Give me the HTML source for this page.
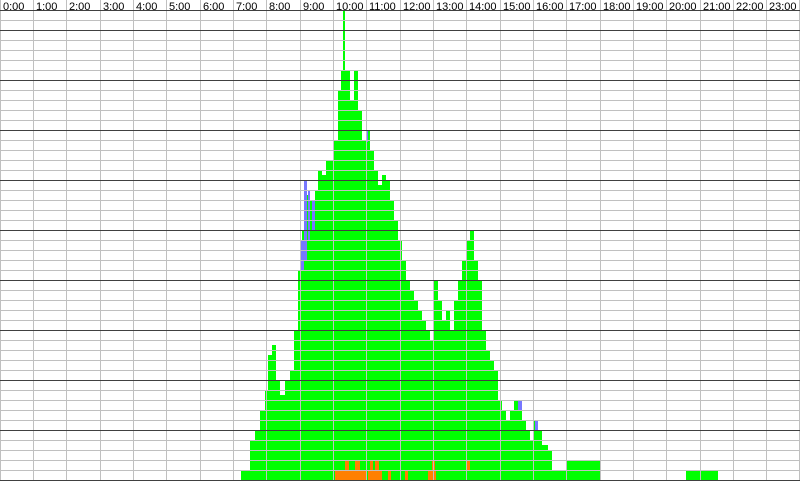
<!DOCTYPE html>
<html><head><meta charset="utf-8"><style>
html,body{margin:0;padding:0;background:#fff}
svg{display:block}
text{font-family:"Liberation Sans",sans-serif;font-size:11px;fill:#000}
</style></head><body>
<svg width="800" height="481" xmlns="http://www.w3.org/2000/svg" shape-rendering="crispEdges">
<rect width="800" height="481" fill="#fff"/>
<path fill="#00ff00" d="M241,481 V470 H250 V440 H255 V430 H260 V410 H265 V390 H268 V355 H272 V345 H276 V380 H280 V395 H285 V380 H290 V370 H294 V330 H298 V270 H302 V230 H305 V195 H310 V200 H315 V190 H318 V170 H322 V175 H326 V160 H330 V160 H334 V140 H338 V90 H341 V70 H343 V5 H345 V70 H350 V100 H354 V70 H358 V110 H362 V140 H366 V130 H370 V150 H374 V170 H378 V185 H382 V175 H386 V180 H390 V200 H394 V220 H398 V240 H402 V260 H406 V280 H410 V290 H414 V300 H418 V310 H422 V320 H426 V330 H430 V340 H434 V280 H438 V300 H442 V320 H446 V310 H450 V330 H454 V300 H458 V280 H462 V260 H466 V240 H470 V230 H474 V260 H478 V280 H482 V330 H486 V350 H490 V360 H494 V370 H498 V400 H502 V410 H506 V420 H510 V410 H514 V400 H518 V410 H522 V420 H526 V430 H530 V440 H534 V420 H538 V430 H542 V445 H548 V450 H552 V470 H566 V460 H600 V481 Z"/>
<rect x="686" y="470" width="32" height="11" fill="#00ff00"/>
<g fill="#7777ff">
<rect x="304" y="180" width="3" height="80"/><rect x="308" y="190" width="2" height="50"/><rect x="312" y="200" width="3" height="30"/><rect x="301" y="240" width="3" height="30"/><rect x="366" y="130" width="2" height="12"/><rect x="518" y="400" width="4" height="10"/><rect x="535" y="420" width="3" height="10"/>
</g>
<g fill="#ff8000">
<rect x="335" y="470" width="32" height="11"/><rect x="345" y="460" width="4" height="10"/><rect x="355" y="460" width="5" height="10"/><rect x="368" y="470" width="14" height="11"/><rect x="370" y="460" width="3" height="10"/><rect x="375" y="460" width="4" height="10"/><rect x="388" y="470" width="3" height="11"/><rect x="405" y="470" width="3" height="11"/><rect x="428" y="470" width="8" height="11"/><rect x="432" y="460" width="3" height="10"/><rect x="467" y="460" width="3" height="10"/>
</g>
<g stroke="#c0c0c0" stroke-width="1">
<path d="M0,20.5H800M0,40.5H800M0,50.5H800M0,60.5H800M0,70.5H800M0,90.5H800M0,100.5H800M0,110.5H800M0,120.5H800M0,140.5H800M0,150.5H800M0,160.5H800M0,170.5H800M0,190.5H800M0,200.5H800M0,210.5H800M0,220.5H800M0,240.5H800M0,250.5H800M0,260.5H800M0,270.5H800M0,290.5H800M0,300.5H800M0,310.5H800M0,320.5H800M0,340.5H800M0,350.5H800M0,360.5H800M0,370.5H800M0,390.5H800M0,400.5H800M0,410.5H800M0,420.5H800M0,440.5H800M0,450.5H800M0,460.5H800M0,470.5H800"/>
<path d="M0.5,0V481M33.5,0V481M66.5,0V481M100.5,0V481M133.5,0V481M166.5,0V481M200.5,0V481M233.5,0V481M266.5,0V481M300.5,0V481M333.5,0V481M366.5,0V481M400.5,0V481M433.5,0V481M466.5,0V481M500.5,0V481M533.5,0V481M566.5,0V481M600.5,0V481M633.5,0V481M666.5,0V481M700.5,0V481M733.5,0V481M766.5,0V481M799.5,0V481"/>
</g>
<g stroke="#404040" stroke-width="1">
<path d="M0,10.5H800M0,30.5H800M0,80.5H800M0,130.5H800M0,180.5H800M0,230.5H800M0,280.5H800M0,330.5H800M0,380.5H800M0,430.5H800M0,480.5H800"/>
</g>
<rect x="0" y="0" width="800" height="10" fill="#fff"/>
<g stroke="#c0c0c0"><path d="M0.5,0V10M33.5,0V10M66.5,0V10M100.5,0V10M133.5,0V10M166.5,0V10M200.5,0V10M233.5,0V10M266.5,0V10M300.5,0V10M333.5,0V10M366.5,0V10M400.5,0V10M433.5,0V10M466.5,0V10M500.5,0V10M533.5,0V10M566.5,0V10M600.5,0V10M633.5,0V10M666.5,0V10M700.5,0V10M733.5,0V10M766.5,0V10M799.5,0V10"/></g>
<g>
<text x="3" y="10">0:00</text><text x="36" y="10">1:00</text><text x="69" y="10">2:00</text><text x="103" y="10">3:00</text><text x="136" y="10">4:00</text><text x="169" y="10">5:00</text><text x="203" y="10">6:00</text><text x="236" y="10">7:00</text><text x="269" y="10">8:00</text><text x="303" y="10">9:00</text><text x="336" y="10">10:00</text><text x="369" y="10">11:00</text><text x="403" y="10">12:00</text><text x="436" y="10">13:00</text><text x="469" y="10">14:00</text><text x="503" y="10">15:00</text><text x="536" y="10">16:00</text><text x="569" y="10">17:00</text><text x="603" y="10">18:00</text><text x="636" y="10">19:00</text><text x="669" y="10">20:00</text><text x="703" y="10">21:00</text><text x="736" y="10">22:00</text><text x="769" y="10">23:00</text>
</g>
</svg>
</body></html>
